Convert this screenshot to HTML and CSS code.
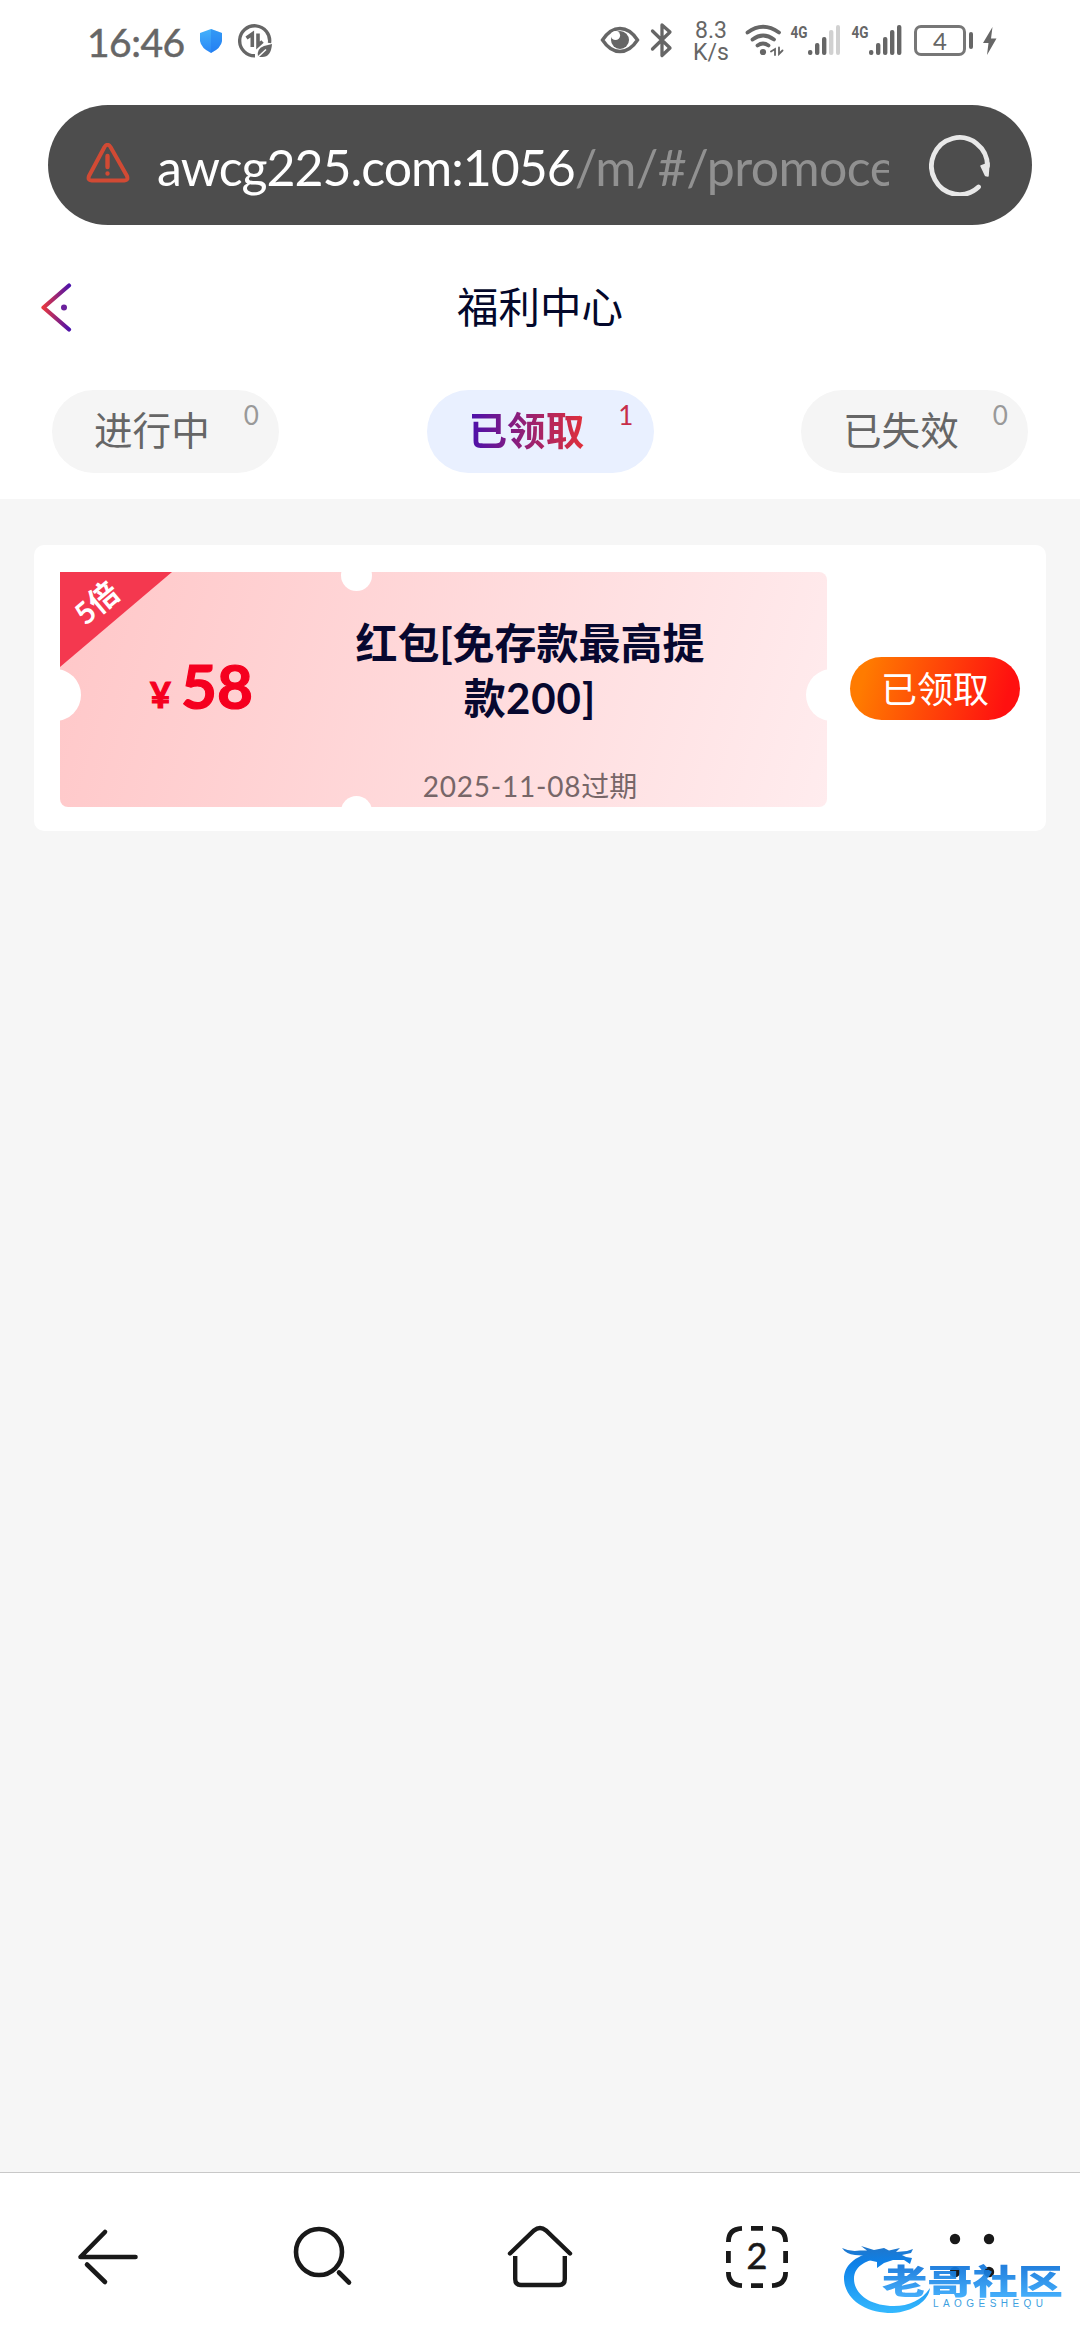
FILE: index.html
```html
<!DOCTYPE html>
<html lang="zh-CN">
<head>
<meta charset="utf-8">
<title>福利中心</title>
<link rel="stylesheet" href="styles.css">
</head>
<body>
<div class="screen">
  <header class="status">
    <span class="clock">16:46</span>
    <svg class="shield" width="24" height="26" viewBox="0 0 24 26"><defs><linearGradient id="sh" x2="0" y2="1"><stop stop-color="#44b2fb"/><stop offset="1" stop-color="#2a86f6"/></linearGradient></defs><path d="M12 1 23 5V13Q22 20 12 25 2 20 1 13V5Z" fill="url(#sh)"/><path d="M12 1 23 5V13Q22 20 12 25Z" fill="#1c75ee" opacity=".4"/></svg>
    <svg class="saver" width="34" height="34" viewBox="0 0 34 34" fill="none" stroke="#666" stroke-width="3.4"><path d="M31.5 19A15 15 0 1 0 17 31.8"/><path d="M8.5 14 14.3 10V23M20 9.500V21.500L24.500 17.500" stroke-width="3.600"/><path d="M20 33Q18 25 26 22L34 20Q33 34 23 33Z" fill="#666" stroke="none"/><path d="M20 33 28 25.500" stroke="#fff" stroke-width="1.500"/></svg>
    <svg class="eye" width="40" height="28" viewBox="600 26 40 28"><path d="M602.500 40Q610 28.500 620 28.500T637.500 40Q630 51.500 620 51.500T602.500 40Z" fill="none" stroke="#666" stroke-width="3.400"/><circle cx="620" cy="40" r="9" fill="#666"/><circle cx="615.500" cy="35.500" r="4.600" fill="#fff"/></svg>
    <svg class="bt" width="24" height="36" viewBox="650 22 24 36" fill="none" stroke="#666" stroke-width="3.300" stroke-linejoin="round" stroke-linecap="round"><path d="M652.500 31 670 48 662 55.500V25L670 32 652.500 49"/></svg>
    <span class="speed"><span>8.3</span><span>K/s</span></span>
    <svg class="wifi" width="40" height="34" viewBox="744 22 40 34" fill="none" stroke="#666" stroke-width="3.800" stroke-linecap="round"><path d="M747.500 32.500Q763 21 779 32.500M752.500 39.500Q763 31.500 774 39.500M757.500 45.500Q763 41.500 768.500 45.500"/><circle cx="763" cy="52" r="3.100" fill="#666" stroke="none"/><path d="M771 51.500 775 49V55M779 47.500V54L782.500 50.500" stroke-width="1.800"/></svg>
    <svg class="signal" width="50" height="34" viewBox="790 22 50 34" fill="#666"><text x="790.500" y="38" class="net" textLength="17" lengthAdjust="spacingAndGlyphs">4G</text><rect x="808" y="50" width="4.400" height="5" rx="2"/><rect x="815" y="43" width="4.400" height="12" rx="2"/><rect x="822" y="37" width="4.400" height="18" rx="2"/><rect x="829" y="30" width="4.400" height="25" rx="2" opacity=".3"/><rect x="836" y="25" width="4" height="30" rx="2" opacity=".3"/></svg>
    <svg class="signal second" width="51" height="34" viewBox="851 22 51 34" fill="#666"><text x="851.500" y="38" class="net" textLength="17" lengthAdjust="spacingAndGlyphs">4G</text><rect x="869" y="50" width="4.400" height="5" rx="2"/><rect x="876" y="43" width="4.400" height="12" rx="2"/><rect x="883" y="37" width="4.400" height="18" rx="2"/><rect x="890" y="30" width="4.400" height="25" rx="2"/><rect x="897" y="25" width="4.400" height="30" rx="2"/></svg>
    <span class="battery">4</span>
    <svg class="bolt" width="14" height="28" viewBox="983 27 14 28"><path d="M992.500 27 983 43H988.500L987 55 996.500 38.500H991Z" fill="#666"/></svg>
  </header>

  <div class="address">
    <svg class="warn" width="44" height="42" viewBox="86 145 44 42" fill="none" stroke="#d14a34" stroke-width="4" stroke-linecap="round" stroke-linejoin="round"><path d="M102.500 149Q105.500 144.500 108.500 149L125 178Q126.500 182.500 122.500 182.500H89.500Q85.500 182.500 87 178Z" transform="translate(2 0)"/><path d="M107.500 158V169M107.500 175.500V175.600" stroke-width="4.400"/></svg>
    <span class="url">awcg225.com:1056<span class="path">/m/#/promoce</span></span>
    <svg class="reload" width="62" height="64" viewBox="929 134 62 64"><path d="M978.500 189A28 28.500 0 1 1 987.500 168" fill="none" stroke="#e8e8e8" stroke-width="4.800" stroke-linecap="round"/><path d="M981 168 989 165 988 178 985.500 177.500Z" fill="#e8e8e8" stroke="#e8e8e8" stroke-width="1.500" stroke-linejoin="round"/></svg>
  </div>

  <nav class="title">
    <svg class="back" width="32" height="50" viewBox="41 281 32 50" fill="none" stroke-linecap="round" stroke-linejoin="round"><defs><linearGradient id="bk" gradientUnits="userSpaceOnUse" x1="43" y1="0" x2="70" y2="0"><stop stop-color="#e8383f"/><stop offset="1" stop-color="#4a12ad"/></linearGradient></defs><path d="M69 284.500 43.500 306.500 69 328.500" stroke="url(#bk)" stroke-width="4.200"/><circle cx="64" cy="306.500" r="3" fill="#6a219c"/></svg>
    <h1>福利中心</h1>
  </nav>

  <div class="tabs">
    <div class="tab"><span>进行中</span><sup>0</sup></div>
    <div class="tab active"><span>已领取</span><sup>1</sup></div>
    <div class="tab"><span>已失效</span><sup>0</sup></div>
  </div>

  <main>
    <section class="card">
      <div class="coupon">
        <svg class="ribbon" width="112" height="95" viewBox="0 0 112 95"><path d="M0 0H112L0 95Z" fill="#f4384f"/></svg>
        <span class="times">5倍</span>
        <i class="notch side left"></i><i class="notch side right"></i>
        <i class="notch small top"></i><i class="notch small bottom"></i>
        <div class="amount"><small>¥</small><b>58</b></div>
        <div class="info">
          <h2>红包[免存款最高提<br>款<span class="cap">200]</span></h2>
          <p><span class="date">2025-11-08</span>过期</p>
        </div>
      </div>
      <button class="claimed">已领取</button>
    </section>
  </main>

  <footer class="toolbar">
    <svg width="64" height="64" viewBox="76 2225 64 64" fill="none" stroke="#191919" stroke-width="4.600" stroke-linecap="round" stroke-linejoin="round"><path d="M135.500 2257H80.500L105 2232M105 2282 87 2264.500"/></svg>
    <svg width="64" height="64" viewBox="291 2225 64 64" fill="none" stroke="#191919" stroke-width="4.600"><ellipse cx="319" cy="2252" rx="23" ry="23"/><path d="M339 2272.500 349 2282.500" stroke-linecap="round"/></svg>
    <svg width="68" height="64" viewBox="506 2225 68 64" fill="none" stroke="#191919" stroke-width="4.400" stroke-linecap="round"><path d="M510 2253.500 534 2230.500Q540 2225.500 546 2230.500L570 2253.500"/><path d="M515.200 2256V2279Q515.200 2285 521 2285H559Q564.800 2285 564.800 2279V2256" stroke-linecap="butt"/></svg>
    <svg width="64" height="64" viewBox="724 2225 64 64" fill="none" stroke="#191919" stroke-width="4.800"><path d="M741 2228.400Q727.400 2229 727.400 2242M750 2228.400H762M771 2228.400Q784.600 2229 784.600 2242M784.600 2251V2263M784.600 2272Q784.600 2285 771 2285.600M762 2285.600H750M741 2285.600Q727.400 2285 727.400 2272M727.400 2263V2251"/><text x="756" y="2269" class="count">2</text></svg>
    <svg width="64" height="64" viewBox="940 2225 64 64" fill="#191919"><circle cx="955" cy="2239" r="5.200"/><circle cx="989" cy="2239" r="5.200"/><circle cx="955" cy="2272" r="5.200"/><circle cx="989" cy="2272" r="5.200"/></svg>
  </footer>

  <svg class="watermark" width="228" height="76" viewBox="840 2242 228 76">
    <defs><linearGradient id="wm" gradientUnits="userSpaceOnUse" x1="0" y1="2246" x2="0" y2="2314"><stop stop-color="#2176c9"/><stop offset=".25" stop-color="#0d80e8"/><stop offset="1" stop-color="#35baff"/></linearGradient><linearGradient id="wt" gradientUnits="userSpaceOnUse" x1="0" y1="2267" x2="0" y2="2297"><stop stop-color="#1277dc"/><stop offset="1" stop-color="#35a8fb"/></linearGradient></defs>
    <g fill="url(#wm)">
      <path d="M874 2252C854 2256 844 2266 844 2279C845 2300 866 2313 892 2313C914 2312 929 2300 930 2288C922 2300 909 2306 894 2306C869 2306 854 2293 854 2279C854 2267 864 2261 881 2257Z"/>
      <path d="M842 2248Q850 2252 860 2250.500L867 2250.500 861 2246 874 2250 884 2248 889 2250.500 900 2248 896 2252 907 2251 913 2249 911 2253 902 2255 906 2257 912 2258 910 2264 904 2260 893 2260 884 2263 877 2268 877 2262 868 2260 870 2256 855 2255Q846 2254 842 2248Z"/>
    </g>
    <text x="882" y="2293.500" class="brand" fill="url(#wt)" textLength="181" lengthAdjust="spacingAndGlyphs">老哥社区</text>
    <text x="933" y="2306.500" class="latin" textLength="110">LAOGESHEQU</text>
  </svg>
</div>
</body>
</html>
```

FILE: styles.css
```css
* { box-sizing: border-box; }
body { margin: 0; background: #fff; font-family: Lato, "Noto Sans CJK SC", sans-serif; }
svg { display: block; flex: none; }
.screen { position: relative; width: 1080px; height: 2340px; display: flex; flex-direction: column; overflow: hidden; }

.status { height: 105px; flex: none; display: flex; align-items: flex-start; color: #666; }
.clock { width: 97px; margin: 18px 0 0 87px; font-size: 39px; line-height: 48px; letter-spacing: -.5px; white-space: nowrap; -webkit-text-stroke: .5px #666; }
.shield { margin: 28px 0 0 15px; }
.saver { margin: 24px 0 0 15px; }
.eye { margin: 26px 0 0 328px; }
.bt { margin: 22px 0 0 10px; }
.speed { width: 36px; margin: 20px 0 0 19px; display: flex; flex-direction: column; font: 23px/21.500px Roboto, sans-serif; text-align: center; }
.wifi { margin: 22px 0 0 15px; }
.signal { margin: 22px 0 0 6px; }
.signal.second { margin-left: 11px; }
.net { font: bold 17px Roboto, sans-serif; }
.battery { position: relative; width: 52px; height: 31px; margin: 25px 0 0 12px; border: 3px solid #777; border-radius: 7px; font-size: 24px; line-height: 26px; text-align: center; }
.battery::after { content: ""; position: absolute; left: 52px; top: 4px; width: 4px; height: 17px; border-radius: 2px; background: #666; }
.bolt { margin: 27px 0 0 17px; }

.address { width: 984px; height: 120px; margin: 0 48px; flex: none; border-radius: 60px; background: #4d4d4d; display: flex; align-items: center; }
.warn { margin: 0 0 2px 38px; }
.url { width: 732px; margin: 3px 0 0 27px; overflow: hidden; white-space: nowrap; color: #fff; font-size: 50px; line-height: 64px; letter-spacing: -1px; }
.path { color: #919191; letter-spacing: -.6px; }
.reload { margin: 0 0 2px 40px; }

.title { height: 163px; margin-bottom: 2px; flex: none; display: grid; grid-template-columns: 200px 1fr 200px; align-items: center; }
.back { margin-left: 41px; }
.title h1 { margin: 0; text-align: center; font-size: 41.500px; line-height: 60px; font-weight: 400; color: #03082b; }

.tabs { height: 109px; flex: none; padding: 0 52px; display: flex; justify-content: space-between; align-items: flex-start; }
.tab { width: 227px; height: 83px; border-radius: 42px; background: #f5f5f5; padding-left: 42px; display: flex; color: #666; font-size: 38.600px; line-height: 80px; }
.tab sup { margin: 10px 0 0 34px; font-size: 26px; line-height: 30px; color: #999; }
.tab.active { background: #e9f0ff; }
.tab.active span { font-weight: 700; background: linear-gradient(90deg, #4a10ad, #e1303a); -webkit-background-clip: text; background-clip: text; color: transparent; }
.tab.active sup { color: #c62d4a; }

main { flex: 1; background: #f6f6f6; padding: 46px 34px; }
.card { height: 286px; border-radius: 10px; background: #fff; padding: 0 26px; display: flex; align-items: center; }
.coupon { position: relative; width: 767px; height: 235px; margin-top: 3px; border-radius: 0 8px 8px 8px; overflow: hidden; background: linear-gradient(107deg, #ffc7c8, #ffecee); display: grid; grid-template-columns: 283px 374px; }
.ribbon { position: absolute; left: 0; top: 0; }
.times { position: absolute; left: 6px; top: 12px; width: 60px; text-align: center; font-size: 30px; line-height: 36px; font-weight: 700; color: #fff; transform: rotate(-40deg); }
.notch { position: absolute; border-radius: 50%; background: #fff; }
.side { width: 52px; height: 52px; top: 97px; }
.left { left: -31px; }
.right { right: -31px; }
.small { width: 31px; height: 31px; left: 281px; }
.top { top: -12px; }
.bottom { bottom: -20px; }
.amount { color: #f5001f; display: flex; align-items: baseline; justify-content: center; gap: 10px; padding-top: 75px; -webkit-text-stroke: 1.200px #f5001f; }
.amount small { font: bold 36px/76px Lato, sans-serif; position: relative; top: -1px; }
.amount b { font-size: 62px; line-height: 76px; }
.info { text-align: center; padding-top: 44px; }
.info h2 { margin: 0; font-size: 42px; line-height: 55px; font-weight: 700; color: #07082f; }
.cap { letter-spacing: 1px; }
.info p { margin: 44px 0 0; font-size: 28px; line-height: 32px; color: #776668; }
.date { letter-spacing: .8px; }
.claimed { width: 170px; height: 63px; margin: 0 0 0 23px; padding: 0 0 3px; border: 0; border-radius: 32px; background: linear-gradient(105deg, #ff7b00 10%, #ff1010 90%); color: #fff; font: 36px/58px "Noto Sans CJK SC", sans-serif; }

.toolbar { height: 168px; flex: none; border-top: 1px solid #c8c8c8; padding: 52px 76px 0; display: flex; justify-content: space-between; align-items: flex-start; }
.count { font: 36px Lato, sans-serif; text-anchor: middle; fill: #191919; stroke: #191919; stroke-width: .6px; }
.watermark { position: absolute; left: 840px; top: 2242px; }
.brand { font: 900 34px "Noto Sans CJK SC", sans-serif; opacity: .92; }
.latin { font: 10px "Liberation Sans", sans-serif; fill: #3d9fe0; }
```
